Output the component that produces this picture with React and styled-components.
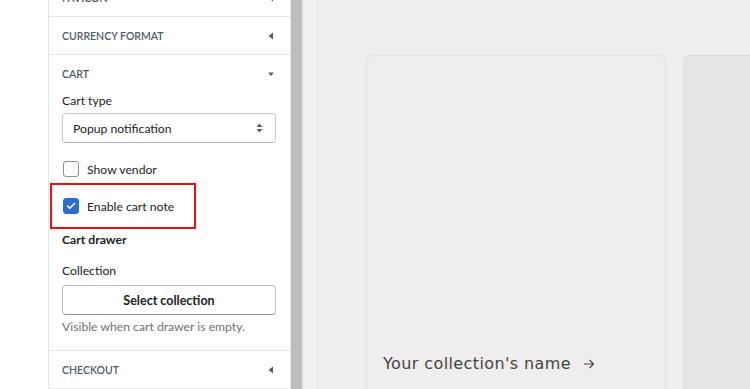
import React from 'react'
import styled, { createGlobalStyle } from 'styled-components'

const Global = createGlobalStyle`
  html, body { margin: 0; padding: 0; background: #fff; }
  body { font-family: Lato, "Noto Sans", sans-serif; }
`

const Page = styled.div`
  display: flex;
  height: 389px;
  overflow: hidden;
  background: #fff;
`

const Gutter = styled.div`
  width: 48px;
  flex: none;
`

const Sidebar = styled.div`
  width: 241px;
  flex: none;
  border-left: 1px solid #e4e5e7;
  border-right: 1px solid #e4e5e7;
  background: #fff;
  display: flex;
  flex-direction: column;
  margin-top: -21px;
`

const Section = styled.div`
  border-bottom: 1px solid #e4e5e7;
`

const Header = styled.div`
  height: 37px;
  padding: 1px 15px 0 13px;
  box-sizing: border-box;
  display: flex;
  align-items: center;
  justify-content: space-between;
  font-size: 10.5px;
  font-weight: 600;
  color: #4f5a68;
  text-transform: uppercase;
`

const Caret = ({ down }) => (
  <svg width="8" height="8" viewBox="0 0 8 8">
    {down ? <path d="M1 2.5h6L4 6z" fill="#5c5f62" /> : <path d="M6 0.5v7L1.5 4z" fill="#5c5f62" />}
  </svg>
)

const Body = styled.div`
  padding: 0 14px 14px 13px;
  display: flex;
  flex-direction: column;
`

const Label = styled.div`
  font-size: 12.2px;
  line-height: 18px;
  color: ${p => (p.muted ? '#6d7175' : '#202223')};
  font-weight: ${p => (p.bold ? 700 : 400)};
  margin-top: ${p => p.mt || 0}px;
`

const Select = styled.div`
  margin-top: 3px;
  height: 30px;
  box-sizing: border-box;
  border: 1px solid #c9cccf;
  border-bottom-color: #aeb4b9;
  border-radius: 4px;
  padding: 0 12px 0 10px;
  display: flex;
  align-items: center;
  justify-content: space-between;
  font-size: 12.2px;
  color: #202223;
`

const CheckRow = styled.label`
  display: flex;
  align-items: center;
  gap: 8px;
  height: 20px;
  font-size: 12.2px;
  color: #202223;
  margin-top: ${p => p.mt || 0}px;
`

const Box = styled.span`
  width: 16px;
  height: 16px;
  box-sizing: border-box;
  border-radius: 3px;
  margin-left: 1px;
  display: flex;
  align-items: center;
  justify-content: center;
  border: 1px solid ${p => (p.checked ? '#2c6ecb' : '#8c9196')};
  background: ${p => (p.checked ? '#2c6ecb' : '#fff')};
`

const Highlight = styled.div`
  margin: 4px 0 0 -12px;
  width: 146px;
  box-sizing: border-box;
  border: 2px solid #f30d0d;
  padding: 11px 0 11px 10px;
`

const Button = styled.div`
  margin-top: 5px;
  height: 30px;
  box-sizing: border-box;
  border: 1px solid #babfc3;
  border-bottom-color: #8c9196;
  border-radius: 4px;
  display: flex;
  align-items: center;
  justify-content: center;
  font-size: 12.5px;
  font-weight: 700;
  color: #202223;
`

const Scrollbar = styled.div`
  width: 11px;
  flex: none;
  background: #bdbdbd;
`

const Strip = styled.div`
  width: 13px;
  flex: none;
  background: #f0f1f3;
  border-left: 2px solid #e6e7e9;
  border-right: 1px solid #e2e3e5;
`

const Preview = styled.div`
  flex: 1;
  background: #efeeec;
  display: flex;
  gap: 17px;
  padding: 55px 0 0 48px;
`

const Card = styled.div`
  flex: none;
  width: ${p => p.w}px;
  height: 360px;
  box-sizing: border-box;
  border: 1px solid ${p => (p.alt ? '#dddcda' : '#e2e1df')};
  border-radius: 6px;
  background: ${p => (p.alt ? '#e6e5e3' : '#efeeec')};
  padding: 298px 0 0 16px;
`

const CardTitle = styled.div`
  font-family: "DejaVu Sans", sans-serif;
  font-size: 16px;
  letter-spacing: 0.4px;
  color: #444;
  display: flex;
  align-items: center;
  gap: 12px;
`

export default function App() {
  return (
    <Page>
      <Global />
      <Gutter />
      <Sidebar>
        <Section>
          <Header>Favicon<Caret /></Header>
        </Section>
        <Section>
          <Header>Currency format<Caret /></Header>
        </Section>
        <Section>
          <Header>Cart<Caret down /></Header>
          <Body>
            <Label>Cart type</Label>
            <Select>
              Popup notification
              <svg width="7" height="10" viewBox="0 0 7 10">
                <path d="M3.5 0.5L6.5 4H0.5z M3.5 9.5L0.5 6h6z" fill="#5c5f62" />
              </svg>
            </Select>
            <CheckRow mt={16}>
              <Box />
              Show vendor
            </CheckRow>
            <Highlight>
              <CheckRow>
                <Box checked>
                  <svg width="10" height="8" viewBox="0 0 10 8">
                    <path d="M1.5 4l2.3 2.3L8.5 1.5" stroke="#fff" strokeWidth="1.6" fill="none" strokeLinecap="round" strokeLinejoin="round" />
                  </svg>
                </Box>
                Enable cart note
              </CheckRow>
            </Highlight>
            <Label bold mt={2}>Cart drawer</Label>
            <Label mt={13}>Collection</Label>
            <Button>Select collection</Button>
            <Label muted mt={3}>Visible when cart drawer is empty.</Label>
          </Body>
        </Section>
        <Section>
          <Header>Checkout<Caret /></Header>
        </Section>
      </Sidebar>
      <Scrollbar />
      <Strip />
      <Preview>
        <Card w={300}>
          <CardTitle>
            Your collection's name
            <svg width="12" height="10" viewBox="0 0 12 10">
              <path d="M1 5h9.5M6.5 1l4 4-4 4" stroke="#444" strokeWidth="1.2" fill="none" />
            </svg>
          </CardTitle>
        </Card>
        <Card w={300} alt />
      </Preview>
    </Page>
  )
}
